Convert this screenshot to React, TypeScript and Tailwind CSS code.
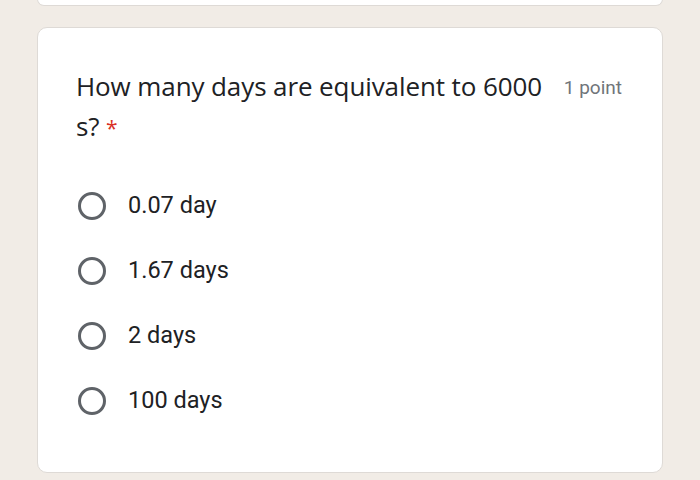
const options = ["0.07 day", "1.67 days", "2 days", "100 days"];

const Radio = () => (
  <div className="h-[28px] w-[28px] shrink-0 rounded-full border-[3px] border-[#5f6368]" />
);

export default function App() {
  return (
    <div className="h-[480px] w-[700px] overflow-hidden bg-[#f1ece6]">
      <div className="mx-[37px] h-[7px] -mt-[1px] rounded-b-[10px] border border-t-0 border-[#dedad6] bg-white" />
      <div className="mx-[37px] mt-[21px] h-[446px] rounded-[10px] border border-[#dedad6] bg-white pl-[38px] pr-[40px] pt-[38px]">
        <div className="flex items-start justify-between">
          <div
            className="w-[475px] text-[26px] leading-[40px] text-[#202124]"
            style={{ fontFamily: '"Open Sans", sans-serif', letterSpacing: "-0.1px" }}
          >
            How many days are equivalent to 6000 s?{" "}
            <span className="text-[21px] leading-none text-[#d93025]">*</span>
          </div>
          <div
            className="pt-[10px] text-[19px] leading-[24px] text-[#70757a]"
            style={{ fontFamily: "Roboto, sans-serif" }}
          >
            1 point
          </div>
        </div>
        <div className="mt-[27px] flex flex-col" style={{ fontFamily: "Roboto, sans-serif" }}>
          {options.map((o) => (
            <div key={o} className="flex h-[65px] items-center gap-[22px] pl-[2px]">
              <Radio />
              <span className="text-[23.5px] text-[#202124]">{o}</span>
            </div>
          ))}
        </div>
      </div>
    </div>
  );
}
